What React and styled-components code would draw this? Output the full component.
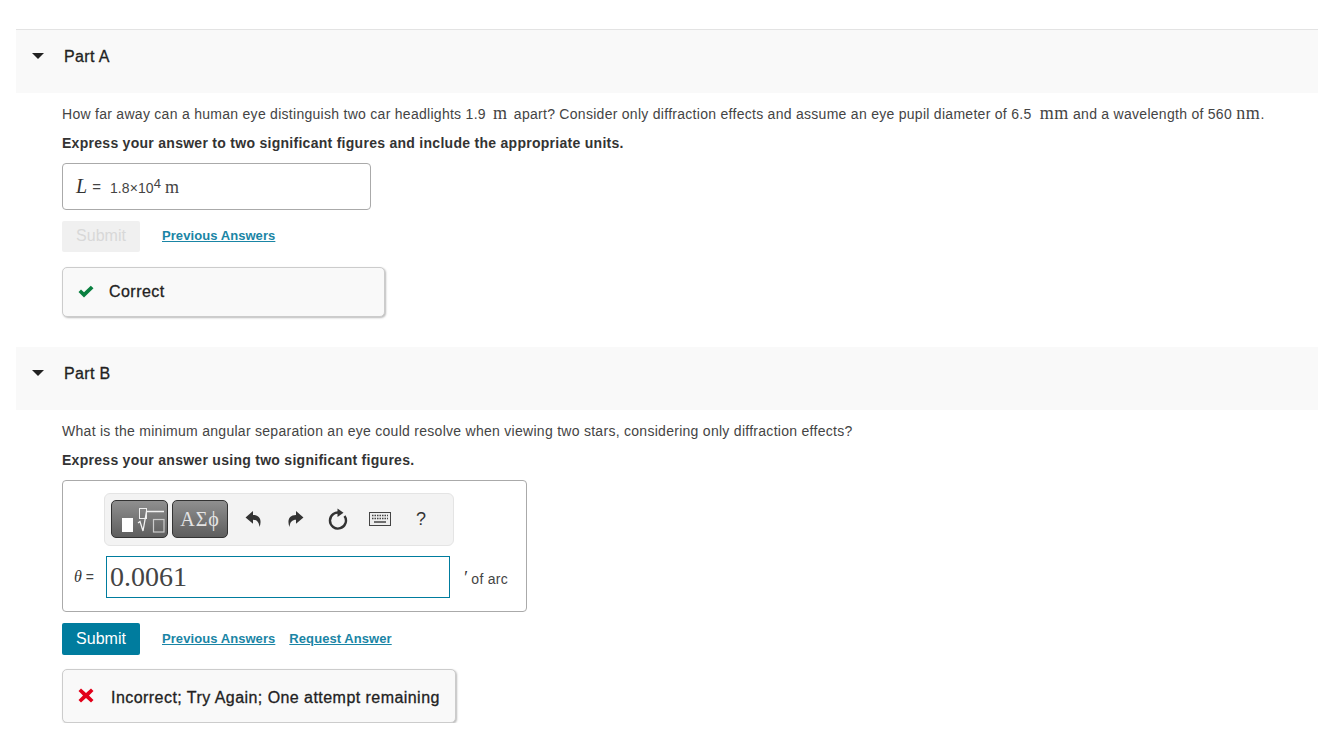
import React from 'react';
import styled, { createGlobalStyle } from 'styled-components';

const Global = createGlobalStyle`
  html, body { margin: 0; padding: 0; background: #fff; }
  body { font-family: "Liberation Sans", Arial, sans-serif; color: #333; overflow: hidden; }
`;

const Page = styled.div`
  padding: 29px 0 0 16px;
`;

const Part = styled.section`
  border-top: ${(p) => (p.$first ? '1px solid #e3e3e3' : 'none')};
  margin-top: ${(p) => (p.$first ? '0' : '30px')};
`;

const PartHeader = styled.div`
  height: 63px;
  background: #f9f9f9;
  display: flex;
  align-items: flex-start;
  padding-top: 18px;
  box-sizing: border-box;
`;

const Caret = styled.span`
  width: 0;
  height: 0;
  margin: 5px 0 0 16px;
  border-left: 6px solid transparent;
  border-right: 6px solid transparent;
  border-top: 6px solid #222;
`;

const PartTitle = styled.h2`
  margin: 0 0 0 20px;
  font-size: 16px;
  line-height: 18px;
  font-weight: 400;
  letter-spacing: 0.35px;
  color: #222;
  -webkit-text-stroke: 0.3px #222;
`;

const Body = styled.div`
  padding-left: 46px;
`;

const Question = styled.p`
  margin: 12px 0 0;
  font-size: 14px;
  line-height: 18px;
  letter-spacing: 0.28px;
  color: #444;
  white-space: nowrap;
`;

const Unit = styled.span`
  font-family: "Liberation Serif", "DejaVu Serif", serif;
  font-size: 18px;
  line-height: 0;
  letter-spacing: 0.6px;
  margin: ${(p) => p.$margin || '0'};
`;

const Instruction = styled.p`
  margin: 11px 0 0;
  font-size: 14px;
  line-height: 18px;
  letter-spacing: 0.28px;
  font-weight: 700;
  color: #333;
`;

const AnswerBox = styled.div`
  margin-top: 11px;
  width: 309px;
  height: 47px;
  box-sizing: border-box;
  border: 1px solid #aaa;
  border-radius: 4px;
  display: flex;
  align-items: center;
  padding-left: 13px;
  font-size: 14px;
  color: #444;
`;

const MathVar = styled.i`
  font-family: "Liberation Serif", serif;
  font-size: ${(p) => p.$size || '20px'};
  color: #333;
  margin-right: ${(p) => p.$gap || '4px'};
`;

const Equals = styled.span`
  margin-right: 9px;
  padding-bottom: 1px;
  font-size: 15px;
`;

const AnswerValue = styled.span`
  letter-spacing: 0.1px;
  padding-top: 2px;
`;

const Power = styled.sup`
  font-size: 13px;
  line-height: 0;
  vertical-align: 5px;
  margin-right: 4px;
`;

const Actions = styled.div`
  margin-top: 11px;
  display: flex;
  align-items: center;
`;

const SubmitButton = styled.button`
  width: 78px;
  height: ${(p) => (p.disabled ? '31px' : '32px')};
  border: none;
  border-radius: 2px;
  padding: ${(p) => (p.disabled ? '0 0 2px' : '0')};
  font-family: inherit;
  font-size: 16px;
  background: ${(p) => (p.disabled ? '#f0f0f0' : '#007c9e')};
  color: ${(p) => (p.disabled ? '#d8d8d8' : '#fff')};
  margin-right: 22px;
`;

const ActionLink = styled.a`
  font-size: 13px;
  font-weight: 700;
  letter-spacing: 0.07px;
  color: #1a85a5;
  text-decoration: underline;
  margin: 0 14px 2px 0;
  cursor: pointer;
`;

const Feedback = styled.div`
  margin-top: ${(p) => p.$top || '15px'};
  width: ${(p) => p.$width};
  height: ${(p) => p.$height};
  box-sizing: border-box;
  display: flex;
  align-items: center;
  background: #f9f9f9;
  border: 1px solid #ccc;
  border-radius: 5px;
  box-shadow: 1px 1px 2px #bbb;
  padding-left: 15px;
  font-size: 16px;
  color: #222;
`;

const FeedbackIcon = styled.svg`
  flex: none;
  margin-bottom: 2px;
`;

const FeedbackText = styled.span`
  margin-left: ${(p) => p.$left};
  padding-top: ${(p) => p.$pad || '0'};
  letter-spacing: 0.45px;
  -webkit-text-stroke: 0.3px #222;
`;

const EditorBox = styled.div`
  margin-top: 11px;
  width: 465px;
  height: 132px;
  box-sizing: border-box;
  border: 1px solid #aaa;
  border-radius: 4px;
  padding: 12px 0 0 41px;
`;

const Toolbar = styled.div`
  width: 350px;
  height: 53px;
  box-sizing: border-box;
  background: #f3f3f3;
  border: 1px solid #e4e4e4;
  border-radius: 6px;
  display: flex;
  align-items: center;
  padding: 0 0 1px 6px;
  color: #333;
`;

const PaletteButton = styled.div`
  width: ${(p) => p.$width};
  height: 38px;
  box-sizing: border-box;
  margin-right: 4px;
  border: 1px solid #333;
  border-radius: 5px;
  background: linear-gradient(#8f8f8f, #5e5e5e);
  display: flex;
  align-items: center;
  justify-content: center;
  color: #e4e4e4;
  font-family: "Liberation Serif", serif;
  font-size: 20px;
  letter-spacing: 1px;
`;

const ToolIcon = styled.svg`
  margin-left: ${(p) => p.$left};
  flex: none;
`;

const Help = styled.span`
  margin-left: 25px;
  font-size: 18px;
  color: #333;
`;

const EditorRow = styled.div`
  display: flex;
  align-items: center;
  margin: 10px 0 0 -30px;
  font-size: 14px;
  color: #444;
`;

const ThetaInput = styled.div`
  width: 344px;
  height: 42px;
  box-sizing: border-box;
  margin-left: 12px;
  border: 1px solid #007c9e;
  padding-left: 3px;
  font-family: "Liberation Serif", serif;
  font-size: 28px;
  line-height: 40px;
  color: #444;
`;

const UnitLabel = styled.span`
  margin-left: 13px;
  padding-top: 2px;
  letter-spacing: 0.3px;
`;

const Undo = ({ flip, left }) => (
  <ToolIcon $left={left} width="16" height="18" viewBox="0 0.5 15 16" style={flip ? { transform: 'scaleX(-1)' } : undefined}>
    <path d="M7.5 1 L0.5 7 L7.5 13 V9.2 C11 9.2 13 11 13.6 16 C15.8 10.5 14.5 4.8 7.5 4.8 Z" fill="#333" />
  </ToolIcon>
);

const App = () => (
  <Page>
    <Global />
    <Part $first>
      <PartHeader>
        <Caret />
        <PartTitle>Part A</PartTitle>
      </PartHeader>
      <Body>
        <Question>
          How far away can a human eye distinguish two car headlights 1.9 <Unit $margin="0 2px 0 3px">m</Unit> apart? Consider only diffraction effects and assume an eye pupil diameter of 6.5 <Unit $margin="0 0 0 4px">mm</Unit> and a wavelength of 560 <Unit>nm</Unit>.
        </Question>
        <Instruction>Express your answer to two significant figures and include the appropriate units.</Instruction>
        <AnswerBox>
          <MathVar $gap="5px">L</MathVar>
          <Equals>=</Equals>
          <AnswerValue>1.8×10<Power>4</Power><Unit>m</Unit></AnswerValue>
        </AnswerBox>
        <Actions>
          <SubmitButton disabled>Submit</SubmitButton>
          <ActionLink>Previous Answers</ActionLink>
        </Actions>
        <Feedback $width="323px" $height="50px">
          <FeedbackIcon width="16" height="13" viewBox="0 0 16 13">
            <path d="M0.5 7 L3 4.5 L6 7.2 L12.8 0.8 L15.5 3.3 L6 12.5 Z" fill="#0a8040" />
          </FeedbackIcon>
          <FeedbackText $left="15px">Correct</FeedbackText>
        </Feedback>
      </Body>
    </Part>
    <Part>
      <PartHeader>
        <Caret />
        <PartTitle>Part B</PartTitle>
      </PartHeader>
      <Body>
        <Question>What is the minimum angular separation an eye could resolve when viewing two stars, considering only diffraction effects?</Question>
        <Instruction>Express your answer using two significant figures.</Instruction>
        <EditorBox>
          <Toolbar>
            <PaletteButton $width="57px">
              <svg width="55" height="36" viewBox="0 0 55 36">
                <rect x="10" y="17" width="11" height="14" fill="#fff" />
                <rect x="27.5" y="7.5" width="7" height="10" fill="none" stroke="#eee" />
                <path d="M26 22 L28 20.5 L31 30 L34.5 10.5 H52" fill="none" stroke="#f2f2f2" strokeWidth="1.3" />
                <rect x="41.5" y="18.5" width="10.5" height="12.5" fill="none" stroke="#ccc" strokeWidth="1.2" />
              </svg>
            </PaletteButton>
            <PaletteButton $width="56px">ΑΣϕ</PaletteButton>
            <Undo left="13px" />
            <Undo flip left="27px" />
            <ToolIcon $left="24px" width="20" height="22" viewBox="0 0 20 22">
              <path d="M12.5 5 A8 8 0 1 0 16.5 8" fill="none" stroke="#333" strokeWidth="2.4" />
              <path d="M9.5 0.5 L15.5 4.8 L9.5 9 Z" fill="#333" />
            </ToolIcon>
            <ToolIcon $left="21px" width="22" height="14" viewBox="0 0 22 14">
              <rect x="0.5" y="0.5" width="21" height="13" fill="#eee" stroke="#444" />
              <path d="M3 3.5 H19 M3 6.5 H19" stroke="#444" strokeWidth="1.5" strokeDasharray="1.5 1" />
              <path d="M5 10 H17" stroke="#444" strokeWidth="1.5" />
            </ToolIcon>
            <Help>?</Help>
          </Toolbar>
          <EditorRow>
            <MathVar $size="16px">θ</MathVar>=
            <ThetaInput>0.0061</ThetaInput>
            <UnitLabel><MathVar $size="18px" $gap="4px">′</MathVar>of arc</UnitLabel>
          </EditorRow>
        </EditorBox>
        <Actions>
          <SubmitButton>Submit</SubmitButton>
          <ActionLink>Previous Answers</ActionLink>
          <ActionLink>Request Answer</ActionLink>
        </Actions>
        <Feedback $top="14px" $width="394px" $height="54px">
          <FeedbackIcon width="16" height="15" viewBox="0 0 16 15">
            <path d="M0.5 3 L3 0.5 L8 5 L13 0.5 L15.5 3 L11 7.5 L15.5 12 L13 14.5 L8 10 L3 14.5 L0.5 12 L5 7.5 Z" fill="#e2001a" />
          </FeedbackIcon>
          <FeedbackText $left="17px" $pad="4px">Incorrect; Try Again; One attempt remaining</FeedbackText>
        </Feedback>
      </Body>
    </Part>
  </Page>
);

export default App;
